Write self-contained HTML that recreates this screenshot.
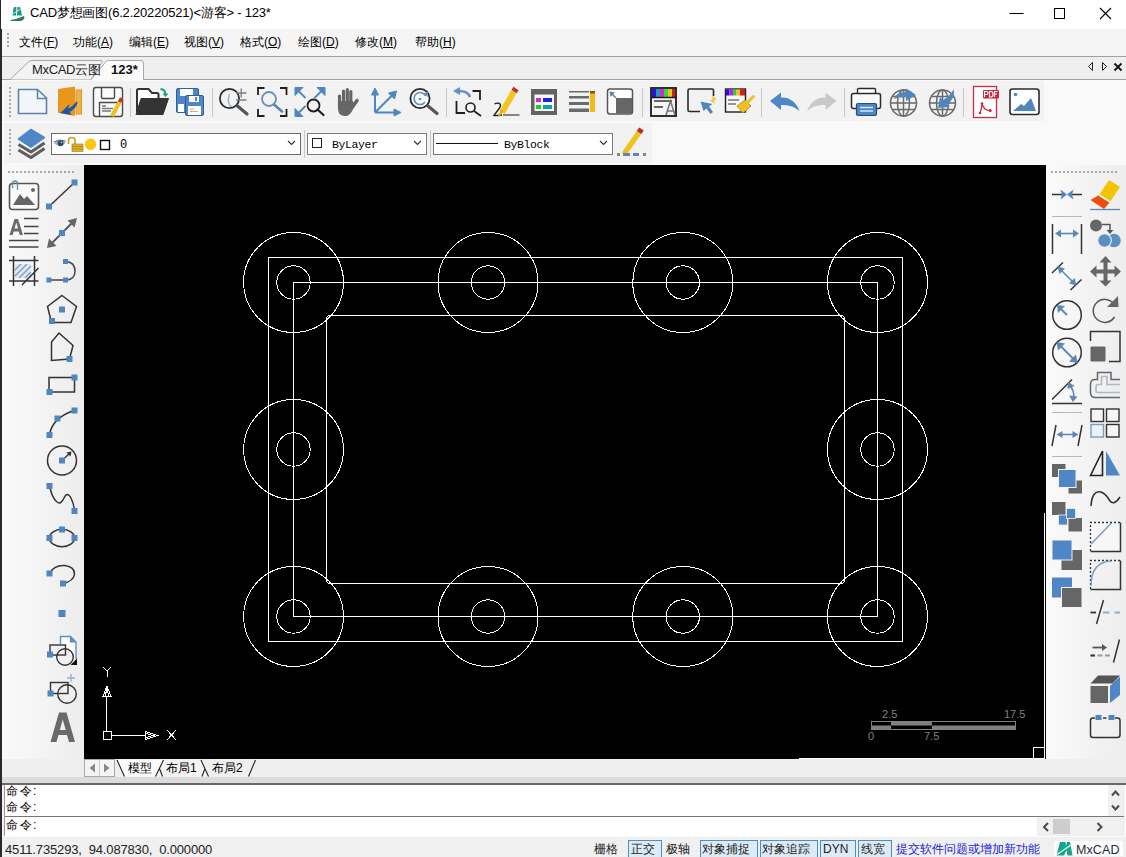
<!DOCTYPE html>
<html><head><meta charset="utf-8">
<style>
*{box-sizing:border-box}
html,body{margin:0;padding:0}
body{width:1126px;height:857px;position:relative;overflow:hidden;background:#f0f0f0;font-family:"Liberation Sans",sans-serif;color:#000}
.a{position:absolute}
.t{position:absolute;white-space:nowrap;line-height:1}
svg{position:absolute;overflow:visible}
</style></head><body>
<!-- window left border -->
<div class="a" style="left:0;top:0;width:2px;height:857px;background:#2a2a2a"></div>
<!-- title bar -->
<div class="a" style="left:1px;top:0;width:1125px;height:29px;background:#fff"></div>
<!-- menu bar -->
<div class="a" style="left:2px;top:29px;width:1124px;height:27px;background:#f5f5f5"></div>
<div class="a" style="left:2px;top:56px;width:1124px;height:1px;background:#a0a0a0"></div>
<!-- doc tabs row -->
<div class="a" style="left:2px;top:57px;width:1124px;height:22px;background:#efefef"></div>
<div class="a" style="left:2px;top:79px;width:1124px;height:1px;background:#a0a0a0"></div>
<!-- toolbar area -->
<div class="a" style="left:2px;top:80px;width:1124px;height:85px;background:#f9f9f9"></div>
<div class="a" style="left:4px;top:81px;width:1040px;height:40px;background:#f2f2f2"></div>
<div class="a" style="left:4px;top:123px;width:648px;height:40px;background:#f2f2f2"></div>
<!-- main area -->
<div class="a" style="left:2px;top:165px;width:82px;height:594px;background:linear-gradient(90deg,#fafafa,#ededed)"></div>
<div class="a" style="left:1046px;top:165px;width:80px;height:594px;background:linear-gradient(90deg,#fafafa,#ededed)"></div>
<div class="a" style="left:1121px;top:165px;width:5px;height:612px;background:#eeeeee"></div>
<!-- canvas -->
<div class="a" style="left:84px;top:165px;width:962px;height:594px;background:#000"></div>
<!-- drawing -->
<svg class="a" style="left:0;top:0" width="1126" height="857" viewBox="0 0 1126 857"><g fill="none" stroke="#fff" stroke-width="1" shape-rendering="crispEdges"><circle cx="293.5" cy="282.5" r="50"/><circle cx="293.5" cy="282.5" r="16.7"/><circle cx="488" cy="282.5" r="50"/><circle cx="488" cy="282.5" r="16.7"/><circle cx="682.8" cy="282.5" r="50"/><circle cx="682.8" cy="282.5" r="16.7"/><circle cx="877.5" cy="282.5" r="50"/><circle cx="877.5" cy="282.5" r="16.7"/><circle cx="293.5" cy="616.5" r="50"/><circle cx="293.5" cy="616.5" r="16.7"/><circle cx="488" cy="616.5" r="50"/><circle cx="488" cy="616.5" r="16.7"/><circle cx="682.8" cy="616.5" r="50"/><circle cx="682.8" cy="616.5" r="16.7"/><circle cx="877.5" cy="616.5" r="50"/><circle cx="877.5" cy="616.5" r="16.7"/><circle cx="293.5" cy="449.5" r="50"/><circle cx="293.5" cy="449.5" r="16.7"/><circle cx="877.5" cy="449.5" r="50"/><circle cx="877.5" cy="449.5" r="16.7"/><rect x="268.5" y="257.5" width="634" height="384"/><rect x="293.5" y="282.5" width="584" height="334"/><path d="M328.5,315.5H842.5L844.5,317.5V581.5L842.5,583.5H328.5L326.5,581.5V317.5Z"/></g></svg>
<svg class="a" style="left:0;top:0" width="1126" height="857" viewBox="0 0 1126 857">
<g fill="none" stroke="#fff" stroke-width="1" shape-rendering="crispEdges">
<rect x="103.5" y="731.5" width="8" height="8"/>
<path d="M106.5,731V697M103,696.5H111L107,686ZM105,696L107,689L109,696M111.5,735.5H145.5M145.5,731.5V739.5L157.5,735.5ZM146,733.5L153,735.5L146,737.5"/>
<path d="M103,667L107,671L111,667M107,671V677"/>
<path d="M167,730L176,740M176,730L167,740"/>
<path d="M1044.5,513V758.5H799"/>
<rect x="1033.5" y="747.5" width="11" height="11"/>
</g>
<g>
<rect x="871" y="721" width="145" height="9" fill="#808080"/>
<rect x="872" y="722" width="19" height="3.5" fill="#000"/>
<rect x="932" y="722" width="83" height="3.5" fill="#000"/>
<rect x="891" y="725.5" width="41" height="3.5" fill="#000"/>
</g>
<g fill="#808080" font-family="Liberation Sans" font-size="11">
<text x="882" y="718">2.5</text><text x="1004" y="718">17.5</text>
<text x="868" y="740">0</text><text x="924" y="740">7.5</text>
</g>
</svg>

<!-- bottom tab bar -->
<div class="a" style="left:2px;top:759px;width:1124px;height:24px;background:#efefef"></div>
<div class="a" style="left:2px;top:777px;width:1124px;height:6px;background:#dcdcdc"></div>
<div class="a" style="left:2px;top:783px;width:1124px;height:2px;background:#696969"></div>
<!-- command area -->
<div class="a" style="left:4px;top:785px;width:1122px;height:52px;background:#fff"></div>
<!-- status bar -->
<div class="a" style="left:2px;top:837px;width:1124px;height:20px;background:#f0f0f0"></div>

<!-- ================= TEXT ================= -->
<div class="t" style="left:30px;top:6px;font-size:13px;letter-spacing:-0.2px">CAD梦想画图(6.2.20220521)&lt;游客&gt; - 123*</div>
<!-- app icon -->
<svg style="left:9px;top:6px" width="17" height="16" viewBox="9 6 17 16">
<path d="M12.5,15.5L13.5,8Q14,7 15,7H16.5L16,15.5ZM17,15.5L17.5,7H19Q20,7 20.5,8L22,15.5Z" fill="#1a9a86"/>
<path d="M12.5,14L21,9" stroke="#aef5e8" stroke-width="1"/>
<path d="M10.5,20Q17,19 24,16L24.5,18Q23,21 20,21H12Q10.5,21 10.5,20Z" fill="#2a7a6a"/>
</svg>
<!-- window buttons -->
<svg style="left:1010px;top:8px" width="110" height="12" viewBox="0 0 110 12">
<path d="M-0.5,5.5H13.5" stroke="#000" stroke-width="1"/>
<rect x="44.5" y="0.5" width="10" height="10" fill="none" stroke="#000"/>
<path d="M90,0L101,11M101,0L90,11" stroke="#000" stroke-width="1.1"/>
</svg>
<!-- menu -->
<svg style="left:7px;top:33px" width="3" height="15"><g fill="#a0a0a0"><rect x="0" y="0" width="2" height="2"/><rect x="0" y="4" width="2" height="2"/><rect x="0" y="8" width="2" height="2"/><rect x="0" y="12" width="2" height="2"/></g></svg>
<div class="t" style="left:19px;top:36px;font-size:12px">文件(<u>F</u>)</div>
<div class="t" style="left:73px;top:36px;font-size:12px">功能(<u>A</u>)</div>
<div class="t" style="left:129px;top:36px;font-size:12px">编辑(<u>E</u>)</div>
<div class="t" style="left:184px;top:36px;font-size:12px">视图(<u>V</u>)</div>
<div class="t" style="left:240px;top:36px;font-size:12px">格式(<u>O</u>)</div>
<div class="t" style="left:298px;top:36px;font-size:12px">绘图(<u>D</u>)</div>
<div class="t" style="left:355px;top:36px;font-size:12px">修改(<u>M</u>)</div>
<div class="t" style="left:415px;top:36px;font-size:12px">帮助(<u>H</u>)</div>

<!-- ROW1 -->
<svg class="a" style="left:0;top:0" width="1126" height="857" viewBox="0 0 1126 857">
<!-- grips -->
<g fill="#a8a8a8">
<rect x="9" y="87" width="2" height="2"/><rect x="9" y="91" width="2" height="2"/><rect x="9" y="95" width="2" height="2"/><rect x="9" y="99" width="2" height="2"/><rect x="9" y="103" width="2" height="2"/><rect x="9" y="107" width="2" height="2"/><rect x="9" y="111" width="2" height="2"/><rect x="9" y="115" width="2" height="2"/>
<rect x="9" y="129" width="2" height="2"/><rect x="9" y="133" width="2" height="2"/><rect x="9" y="137" width="2" height="2"/><rect x="9" y="141" width="2" height="2"/><rect x="9" y="145" width="2" height="2"/><rect x="9" y="149" width="2" height="2"/><rect x="9" y="153" width="2" height="2"/>
</g>
<!-- separators -->
<g fill="#c8c8c8">
<rect x="130" y="88" width="1" height="29"/><rect x="212" y="88" width="1" height="29"/><rect x="446" y="88" width="1" height="29"/>
<rect x="642" y="88" width="1" height="29"/><rect x="761" y="88" width="1" height="29"/><rect x="844" y="88" width="1" height="29"/><rect x="963" y="88" width="1" height="29"/>
<rect x="304" y="130" width="1" height="28"/><rect x="430" y="130" width="1" height="28"/>
</g>
<!-- 1 new -->
<path d="M18.5,89.5H37.5L46.5,98V113.5H18.5Z" fill="#f2f6fb" stroke="#5f82aa" stroke-width="1.6"/>
<path d="M37.5,89.5V98.5H46.5" fill="none" stroke="#5f82aa" stroke-width="1.6"/>
<!-- 2 orange book -->
<path d="M58,89L75,86.5V116L58,113Z" fill="#e9961c"/>
<rect x="76" y="90" width="5.5" height="24" fill="#f0b04a" stroke="#e39324" stroke-width="1"/>
<path d="M77,102Q73,108 67,110L68,106.5L62,112.5L70,114L68.5,111.5Q75,109 77,102Z" fill="#1b56a8" stroke="#1b56a8" stroke-width="1.5"/>
<!-- 3 save pencil -->
<rect x="93.5" y="87.5" width="29" height="29" rx="2.5" fill="#fafafa" stroke="#4a4a4a" stroke-width="1.4"/>
<path d="M101.5,87.5V97Q101.5,98.5 103,98.5H113Q114.5,98.5 114.5,97V87.5" fill="none" stroke="#4a4a4a" stroke-width="1.4"/>
<path d="M99.5,116.5V102.5H121" fill="none" stroke="#4a4a4a" stroke-width="1.4"/>
<path d="M102,106H106M102,108.5H113M102,111H111" stroke="#7a7a7a" stroke-width="1.3"/>
<path d="M112,116L120,101.5" stroke="#f1c21b" stroke-width="4"/>
<path d="M119.5,102L121.5,98" stroke="#c83232" stroke-width="3.5"/>
<!-- 4 open folder -->
<path d="M137,112V90.5Q137,89 138.5,89H148.5L152,93H157Q158.5,93 158.5,94.5V99" fill="#fff" stroke="#333" stroke-width="2"/>
<path d="M136,114.5L141,98.5H168.5L163,114.5Z" fill="#333" stroke="#333" stroke-width="1" stroke-linejoin="round"/>
<path d="M160.5,89Q165,89.5 165.5,94" fill="none" stroke="#17a085" stroke-width="2"/><path d="M162.5,93.5H168.5L165.5,97Z" fill="#17a085"/>
<!-- 5 floppies -->
<rect x="176.5" y="88.5" width="22" height="24" rx="1.5" fill="#4f86c6" stroke="#2f5f9a" stroke-width="1"/>
<rect x="180" y="89" width="13" height="7" fill="#fff"/>
<rect x="185.5" y="95.5" width="18" height="20" rx="1.5" fill="#4f86c6" stroke="#2f5f9a" stroke-width="1"/>
<rect x="189" y="96" width="10" height="6" fill="#fff"/><rect x="195" y="97" width="2" height="4" fill="#4f86c6"/>
<rect x="188" y="106" width="13" height="9" fill="#fff"/><path d="M190,109H194M190,111.5H198" stroke="#d88a50" stroke-width="0.8"/>
<rect x="178" y="104" width="6" height="8" fill="#fff"/>
<!-- 6 zoom +- -->
<path d="M233,108.5Q226,104 229.5,94" fill="none" stroke="#9db0c6" stroke-width="1.4"/>
<circle cx="229.5" cy="98.5" r="9.6" fill="none" stroke="#2b2b2b" stroke-width="1.8"/>
<path d="M237.5,106L247,114" stroke="#555" stroke-width="3.2" stroke-linecap="round"/>
<path d="M236,93H246.5M241.2,88.5V97.5M236,100H246.5" stroke="#6f7f90" stroke-width="1.3"/>
<!-- 7 zoom window -->
<path d="M258,95V88H264.5M280,88H286.5V95M286.5,109V116H280M264.5,116H258V109" fill="none" stroke="#1e1e1e" stroke-width="1.8"/>
<circle cx="269" cy="99" r="7" fill="none" stroke="#6d8fb3" stroke-width="1.8"/>
<path d="M274,104.5L282,111.5" stroke="#5c86b3" stroke-width="2.6" stroke-linecap="round"/>
<!-- 8 zoom extents -->
<g fill="#4f86c0" stroke="#4f86c0">
<path d="M295,87.5H303L295,95.5Z"/><path d="M325,87.5V95.5L317,87.5Z"/><path d="M295,116.5V108.5L303,116.5Z"/>
<path d="M298,90.5L305.5,98M322,90.5L314.5,98M298,113.5L305.5,106" stroke-width="1.8" fill="none"/>
</g>
<circle cx="313.5" cy="105.5" r="6" fill="none" stroke="#1f1f1f" stroke-width="1.8"/>
<path d="M317.5,109.5L323.5,115" stroke="#1f1f1f" stroke-width="2.2" stroke-linecap="round"/>
<!-- 9 hand -->
<g stroke="#666" stroke-linecap="round" fill="none">
<path d="M339.5,96V105M343.5,91V103M347.3,89.5V103M350.8,91.5V104" stroke-width="3.2"/>
<path d="M352.5,107L357,100.5" stroke-width="3.4"/>
</g>
<path d="M338,101H353L354.5,105.5Q352,113 348,115.5Q343,117 339.5,114Q337.5,111 338,104Z" fill="#666"/>
<!-- 10 axes -->
<g stroke="#4f86c0" stroke-width="2" fill="#4f86c0">
<path d="M375,112.5V92M375,112.5H396M375,112.5L392,95.5" fill="none"/>
<path d="M375,88L371.5,95H378.5Z" stroke-width="1"/><path d="M401,112.5L394,109V116Z" stroke-width="1"/><path d="M396.5,91L388.5,93L394.5,99Z" stroke-width="1"/>
</g>
<!-- 11 zoom realtime -->
<circle cx="420" cy="98.5" r="9.6" fill="#f5f8fc" stroke="#2b2b2b" stroke-width="1.8"/>
<path d="M425.5,96A6,6 0 1 0 425,102" fill="none" stroke="#6f8fb0" stroke-width="1.6"/>
<path d="M423,93.5L427.5,97L428,92Z" fill="#6f8fb0"/>
<circle cx="420" cy="99" r="1.3" fill="#6f8fb0"/>
<path d="M428,106L437,113.5" stroke="#555" stroke-width="3.2" stroke-linecap="round"/>
<!-- 12 zoom previous -->
<path d="M470,97Q468,91 459,91" fill="none" stroke="#5f92c8" stroke-width="2.6"/><path d="M453,91L460,87V95Z" fill="#5f92c8"/>
<path d="M472.5,91H480V100M456.5,101V113H465" fill="none" stroke="#1e1e1e" stroke-width="1.8"/>
<circle cx="470.5" cy="107.5" r="4.5" fill="none" stroke="#1e1e1e" stroke-width="1.6"/>
<path d="M474,111L481,116" stroke="#1e1e1e" stroke-width="1.8"/>
<!-- 13 pencil -->
<path d="M494.5,104Q497,102.5 499.5,103.5Q501.5,105 499.5,108Q496.5,112 494,115.5Q495,116 502,115" fill="none" stroke="#222" stroke-width="1.4"/>
<path d="M503,115H519.5" stroke="#555" stroke-width="1.4"/>
<path d="M502,112.5L514,91.5" stroke="#f3c51f" stroke-width="6"/>
<path d="M514,91.5L516,88.5" stroke="#c23030" stroke-width="6"/>
<path d="M499,116L502.5,110" stroke="#e0a800" stroke-width="2"/>
<!-- 14 layer table -->
<rect x="531" y="89" width="26" height="26" fill="#636363"/>
<rect x="534.5" y="94.5" width="19.5" height="16.5" fill="#f7f7f7"/>
<rect x="536" y="98" width="5" height="4" fill="#e020e0"/><rect x="543" y="98" width="9" height="4" fill="#2020e0"/>
<rect x="536" y="105" width="5" height="4" fill="#20d020"/><rect x="543" y="105" width="9" height="4" fill="#10a0a0"/>
<!-- 15 lines pencil -->
<g fill="#6a6a6a"><rect x="569" y="91" width="20" height="1.5"/><rect x="569" y="96" width="20" height="2.5"/><rect x="569" y="102" width="20" height="3"/><rect x="569" y="108.5" width="20" height="3.5"/></g>
<rect x="590" y="91" width="5" height="21" fill="#f0bb1a"/><rect x="590" y="91" width="5" height="2.5" fill="#a04a10"/>
<!-- 16 box arrow -->
<rect x="607.5" y="89" width="25" height="25" rx="2.5" fill="#fff" stroke="#555" stroke-width="1.5"/>
<path d="M616,98H632V112Q632,113.5 630.5,113.5H616Z" fill="#666"/>
<path d="M616,98L610,92" stroke="#5b87b5" stroke-width="1.6"/><path d="M609.5,91.5L615,92.5L610.5,97Z" fill="#5b87b5"/>
<!-- 17 text style -->
<rect x="651" y="88" width="25" height="28" fill="#f4f4f4" stroke="#1a1a1a" stroke-width="1.8"/>
<rect x="652" y="89" width="4" height="8" fill="#2a10e0"/><rect x="656" y="89" width="4" height="8" fill="#1aa0a8"/><rect x="660" y="89" width="4" height="8" fill="#e020e0"/><rect x="664" y="89" width="4" height="8" fill="#30e030"/><rect x="668" y="89" width="4" height="8" fill="#f0c020"/><rect x="672" y="89" width="3" height="8" fill="#d02020"/>
<path d="M651,97.5H676" stroke="#1a1a1a" stroke-width="1.5"/>
<path d="M654,101H672M654,107H663" stroke="#666" stroke-width="2"/>
<path d="M666,115L670.5,101L675,115M667.5,111H673.5" fill="none" stroke="#777" stroke-width="1.6"/>
<!-- 18 select -->
<path d="M700,111.5H689.5Q688,111.5 688,110V90.5Q688,89 689.5,89H712Q713.5,89 713.5,90.5V96" fill="none" stroke="#2a2a2a" stroke-width="1.6"/>
<path d="M700.5,101.5L712.5,104L709,106.5L713,112L710.5,114L706.5,108.5L703.5,111Z" fill="#4f86c0"/>
<path d="M712,95.5L716.5,99L713.5,100.5L715.5,104L710,100.5L713,99Z" fill="#f0c21b"/>
<!-- 19 brush -->
<rect x="725.5" y="89" width="20" height="23" fill="#f6f6f6" stroke="#222" stroke-width="1.4"/>
<rect x="726" y="89.5" width="3.5" height="6" fill="#2a10e0"/><rect x="729.5" y="89.5" width="3.5" height="6" fill="#c020e0"/><rect x="733" y="89.5" width="3.5" height="6" fill="#30d030"/><rect x="736.5" y="89.5" width="3.5" height="6" fill="#f0c020"/><rect x="740" y="89.5" width="5" height="6" fill="#d02020"/>
<path d="M728,100H739M728,104H736" stroke="#777" stroke-width="1.5"/>
<path d="M737,106L745,100L751,106L743,113Z" fill="#f0c020" stroke="#b08a10" stroke-width="0.8"/>
<path d="M747,103L753.5,96.5" stroke="#f0c020" stroke-width="3" stroke-linecap="round"/>
<!-- 20 undo -->
<path d="M770,101L781,92.5V97.5Q794,97 799.5,111Q792,104 781,105V110Z" fill="#4f86c6"/>
<!-- 21 redo -->
<path d="M836.5,101L825.5,92.5V97.5Q812.5,97 807,111Q814.5,104 825.5,105V110Z" fill="#c9c9c9"/>
<!-- 22 printer -->
<rect x="857.5" y="88.5" width="18" height="5.5" rx="1" fill="#fff" stroke="#2a2a2a" stroke-width="1.4"/>
<rect x="851.5" y="93.5" width="29" height="15" rx="2" fill="#fafafa" stroke="#2a2a2a" stroke-width="1.5"/>
<rect x="856.5" y="103.5" width="20" height="12" rx="1.5" fill="#4f86c0" stroke="#234e7a" stroke-width="1.2"/>
<path d="M860,107.5H873M860,111H873" stroke="#cfe6ff" stroke-width="1.5"/>
<!-- 23 globe up -->
<g fill="none" stroke="#6a6a6a" stroke-width="1.5">
<circle cx="903.5" cy="103" r="13"/><ellipse cx="903.5" cy="103" rx="6" ry="13"/><path d="M903.5,90V116M890.5,103H916.5M892,96.5H915M892,109.5H915"/>
</g>
<path d="M894,99Q896,92 906,92V88.5L916,95L906,101V97Q898,97 894,99Z" fill="#4f86c0"/>
<!-- 24 globe down -->
<g fill="none" stroke="#6a6a6a" stroke-width="1.5">
<circle cx="942.5" cy="103" r="13"/><ellipse cx="942.5" cy="103" rx="6" ry="13"/><path d="M942.5,90V116M929.5,103H955.5M931,96.5H954M931,109.5H954"/>
</g>
<path d="M954,89Q955,100 947,104L950,107L938,108L940,97L943,100Q950,96 954,89Z" fill="#4f86c0"/>
<!-- 25 pdf -->
<rect x="973.5" y="86.5" width="23" height="31" fill="#fff" stroke="#c0304a" stroke-width="1.3"/>
<rect x="983" y="90" width="16" height="8.5" rx="1" fill="#c8283c"/>
<path d="M984.5,97V91.5H986.5Q988,91.5 988,93Q988,94.5 986.5,94.5H984.5M989.5,97V91.5H991Q993,91.5 993,94.25Q993,97 991,97ZM994.5,97V91.5H997.5M994.5,94H997" fill="none" stroke="#fff" stroke-width="1.1"/>
<path d="M982,104Q983,107 985,109Q988,111 990,110.5M982,104Q981.5,109 980,113" fill="none" stroke="#c8283c" stroke-width="1.3"/>
<circle cx="982" cy="103.5" r="1.3" fill="#c8283c"/><circle cx="990.2" cy="110.5" r="1.5" fill="#c8283c"/><circle cx="980" cy="113" r="1.3" fill="#c8283c"/>
<!-- 26 image -->
<rect x="1010" y="89" width="29" height="25.5" rx="2.5" fill="#fff" stroke="#2a2a2a" stroke-width="1.6"/>
<circle cx="1015.5" cy="94.5" r="1.8" fill="#4f86c0"/>
<path d="M1013,111L1021,104L1024,106L1031,98L1036,111Z" fill="#4f86c0"/>
</svg>

<!-- ROW2 -->
<!-- doc tabs -->
<svg class="a" style="left:0;top:0" width="1126" height="857" viewBox="0 0 1126 857">
<path d="M10,79.5L29,61.5Q30.5,60.5 32,60.5H101Q103,60.5 102,62L91,79.5" fill="#f3f3f3" stroke="#a6a6a6" stroke-width="1"/>
<path d="M91,79.5L106,61.5Q107,60.5 108.5,60.5H141Q143.5,60.5 143.5,63V79.5" fill="#fafafa" stroke="#a6a6a6" stroke-width="1"/>
<path d="M92,79.5H143" stroke="#fafafa" stroke-width="1.2"/>
<!-- tab scroll arrows -->
<path d="M1092.5,62.5V70.5L1088.5,66.5Z" fill="none" stroke="#222" stroke-width="1"/>
<path d="M1102.5,62.5V70.5L1106.5,66.5Z" fill="none" stroke="#222" stroke-width="1"/>
<path d="M1114.5,63.5L1121.5,70.5M1121.5,63.5L1114.5,70.5" stroke="#111" stroke-width="1.8"/>
<!-- layers icon -->
<path d="M18.5,150L31,157.5L44.5,148.5" fill="none" stroke="#5e5e5e" stroke-width="3.2" stroke-linejoin="round"/>
<path d="M18.5,144.5L31,152L44.5,143" fill="none" stroke="#5e5e5e" stroke-width="3.2" stroke-linejoin="round"/>
<path d="M31,127.8L46,137.5L31,148.8L16.8,139Z" fill="#f4f8fc"/><path d="M31,129.5L44.3,137.5L31,147L18.5,139Z" fill="#4f86c6" stroke="#4f86c6" stroke-width="1.6" stroke-linejoin="round"/>
<!-- combo 1 -->
<rect x="51.5" y="133.5" width="249" height="21" fill="#fff" stroke="#6e6e6e" stroke-width="1"/>
<path d="M53.8,143.5Q59,137.5 66,142Q62,149 53.8,143.5Z" fill="#a9b6c4"/><path d="M54,142Q59,138.5 65.5,141" fill="none" stroke="#5a6a7a" stroke-width="1"/><circle cx="60.5" cy="143.3" r="2.9" fill="#2a4868"/><circle cx="61.3" cy="142.5" r="0.8" fill="#dde"/>
<path d="M68.5,144V140Q68.5,137.5 71.5,137.5Q75,137.5 75,140V145" fill="none" stroke="#c8a020" stroke-width="1.6"/>
<rect x="72" y="144" width="11" height="7.5" fill="#e0b030" stroke="#a07810" stroke-width="0.6"/>
<path d="M72,146.5H83M72,149H83" stroke="#a07810" stroke-width="0.7"/>
<circle cx="90.6" cy="144.2" r="5.3" fill="#ffc800" stroke="#f0a800" stroke-width="1" stroke-dasharray="1.5,1"/>
<rect x="100.5" y="140.5" width="9" height="9" fill="#fff" stroke="#111" stroke-width="1.4"/>
<path d="M288,141L291.5,144.5L295,141" fill="none" stroke="#333" stroke-width="1.1"/>
<!-- combo 2 -->
<rect x="307.5" y="133.5" width="119" height="21" fill="#fff" stroke="#7a7a7a" stroke-width="1"/>
<rect x="312.5" y="138.5" width="9" height="9" fill="#fff" stroke="#222" stroke-width="1"/>
<path d="M414,141L417.5,144.5L421,141" fill="none" stroke="#333" stroke-width="1.1"/>
<!-- combo 3 -->
<rect x="433.5" y="133.5" width="179" height="21" fill="#fff" stroke="#7a7a7a" stroke-width="1"/>
<path d="M436,143.5H498" stroke="#111" stroke-width="1"/>
<path d="M600,141L603.5,144.5L607,141" fill="none" stroke="#333" stroke-width="1.1"/>
<!-- lineweight pencil -->
<path d="M624,154L640,131" stroke="#f0c21b" stroke-width="5.5"/>
<path d="M639,132.5L641.5,129" stroke="#c02a2a" stroke-width="5.5"/>
<g fill="#5b87b5"><rect x="617" y="153" width="3" height="3" fill="#7a8a9a"/><rect x="623" y="153" width="7" height="3"/><rect x="633" y="153" width="6" height="3"/><rect x="643" y="153" width="3" height="3" fill="#7a8a9a"/></g>
</svg>
<div class="t" style="left:32px;top:63px;font-size:13px;color:#222;letter-spacing:-0.35px">MxCAD云图</div>
<div class="t" style="left:111px;top:63px;font-size:13px;font-weight:bold;color:#111">123*</div>
<div class="t" style="left:120px;top:139px;font-size:12px;font-family:'Liberation Mono',monospace">0</div>
<div class="t" style="left:332px;top:139px;font-size:11.5px;font-family:'Liberation Mono',monospace;letter-spacing:-0.4px">ByLayer</div>
<div class="t" style="left:504px;top:139px;font-size:11.5px;font-family:'Liberation Mono',monospace;letter-spacing:-0.4px">ByBlock</div>

<!-- LEFT -->
<svg class="a" style="left:0;top:0" width="1126" height="857" viewBox="0 0 1126 857">
<g fill="#a8a8a8">
<rect x="8" y="171" width="2" height="2"/><rect x="12" y="171" width="2" height="2"/><rect x="16" y="171" width="2" height="2"/><rect x="20" y="171" width="2" height="2"/><rect x="24" y="171" width="2" height="2"/><rect x="28" y="171" width="2" height="2"/><rect x="32" y="171" width="2" height="2"/><rect x="36" y="171" width="2" height="2"/><rect x="40" y="171" width="2" height="2"/><rect x="44" y="171" width="2" height="2"/><rect x="48" y="171" width="2" height="2"/><rect x="52" y="171" width="2" height="2"/><rect x="56" y="171" width="2" height="2"/><rect x="60" y="171" width="2" height="2"/><rect x="64" y="171" width="2" height="2"/><rect x="68" y="171" width="2" height="2"/><rect x="72" y="171" width="2" height="2"/>
<rect x="1051" y="171" width="2" height="2"/><rect x="1055" y="171" width="2" height="2"/><rect x="1059" y="171" width="2" height="2"/><rect x="1063" y="171" width="2" height="2"/><rect x="1067" y="171" width="2" height="2"/><rect x="1071" y="171" width="2" height="2"/><rect x="1075" y="171" width="2" height="2"/><rect x="1079" y="171" width="2" height="2"/><rect x="1083" y="171" width="2" height="2"/><rect x="1087" y="171" width="2" height="2"/><rect x="1091" y="171" width="2" height="2"/><rect x="1095" y="171" width="2" height="2"/><rect x="1099" y="171" width="2" height="2"/><rect x="1103" y="171" width="2" height="2"/><rect x="1107" y="171" width="2" height="2"/><rect x="1111" y="171" width="2" height="2"/><rect x="1115" y="171" width="2" height="2"/>
</g>
<!-- L col1: image -->
<rect x="9.5" y="183.5" width="29" height="26" rx="3" fill="#fafafa" stroke="#555" stroke-width="1.6"/>
<path d="M13,205L20,194L24,199L27,196L35,205Z" fill="#666"/>
<circle cx="33" cy="190" r="2" fill="#666"/>
<path d="M12.5,188V183.5Q12.5,181 15,181Q17.5,181 17.5,183.5V190" fill="none" stroke="#6f8fb0" stroke-width="1.4"/>
<!-- text A= -->
<path fill-rule="evenodd" fill="#6a6a6a" d="M9.5,235L14.5,219H18L23,235H19.8L18.8,231.5H13.7L12.7,235ZM14.5,228.5H18L16.25,222.5Z"/>
<path d="M24,218.5H38.5M24,226.5H38.5M24,233.5H38.5M9,240.5H38.5M9,247H38.5" stroke="#444" stroke-width="1.5"/>
<!-- hatch -->
<path d="M15,264L31,264L31,278L15,278Z" fill="#dfe9f4"/>
<path d="M15,270L21,264M15,276L27,264M19,278L31,266M25,278L31,272" stroke="#7a9cc2" stroke-width="1.3"/>
<path d="M9,260.5H38.5M9,281H38.5M13.5,256V286M34.5,256V286M22,285L38.5,268" stroke="#333" stroke-width="1.5" fill="none"/>
<!-- col2 line -->
<path d="M49,206.5L74.5,182.5" stroke="#333" stroke-width="1.5"/>
<rect x="46" y="203.5" width="6" height="6" fill="#4f86c0"/><rect x="71.5" y="179.5" width="6" height="6" fill="#4f86c0"/>
<!-- dim -->
<path d="M52,243L72,223" stroke="#555" stroke-width="1.8"/>
<path d="M47,248L49,238.5L56.5,246Z" fill="#666"/><path d="M77,218L74.5,227.5L67.5,220.5Z" fill="#666"/>
<rect x="59" y="230" width="6" height="6" fill="#4f86c0"/>
<!-- arc -->
<path d="M49,280H65.5M65.5,261.5Q75,262 75,271Q75,280 65.5,280" fill="none" stroke="#444" stroke-width="1.5"/>
<rect x="46.5" y="277.5" width="5" height="5" fill="#4f86c0"/><rect x="63" y="277.5" width="5" height="5" fill="#4f86c0"/><rect x="63" y="259" width="5" height="5" fill="#4f86c0"/>
<!-- pentagon -->
<path d="M62,295.5L76.5,306.5L71,322.5H51.5L47.5,306.5Z" fill="none" stroke="#333" stroke-width="1.5"/>
<rect x="59" y="306.5" width="6" height="6" fill="#4f86c0"/><rect x="49" y="318" width="6" height="6" fill="#4f86c0"/>
<!-- polygon -->
<path d="M59,333L73,345.5L69.5,359L51.5,360.5V342Z" fill="none" stroke="#333" stroke-width="1.5"/>
<rect x="66.5" y="356" width="6" height="6" fill="#4f86c0"/>
<!-- rect -->
<rect x="49" y="377.5" width="25.5" height="14.5" fill="none" stroke="#333" stroke-width="1.5"/>
<rect x="71.5" y="374.5" width="6" height="6" fill="#4f86c0"/><rect x="46.5" y="389" width="6" height="6" fill="#4f86c0"/>
<!-- 3p arc -->
<path d="M49.5,435Q52,418 74,410.5" fill="none" stroke="#333" stroke-width="1.5"/>
<rect x="46.5" y="432" width="6" height="6" fill="#4f86c0"/><rect x="54.5" y="415.5" width="6" height="6" fill="#4f86c0"/><rect x="71.5" y="407.5" width="6" height="6" fill="#4f86c0"/>
<!-- circle -->
<circle cx="62" cy="460.5" r="14.5" fill="none" stroke="#333" stroke-width="1.5"/>
<path d="M62,460.5L70,453" stroke="#333" stroke-width="1.4"/><path d="M71.5,451.5L66.5,452.5L70.5,456.5Z" fill="#333"/>
<rect x="59" y="457.5" width="6" height="6" fill="#4f86c0"/>
<!-- spline -->
<path d="M49.5,486Q52,498 57,502Q61,505 64,498Q67,491 71,498Q73.5,503 74.5,510" fill="none" stroke="#333" stroke-width="1.5"/>
<rect x="46.5" y="483" width="6" height="6" fill="#4f86c0"/><rect x="71.5" y="508" width="6" height="6" fill="#4f86c0"/>
<!-- ellipse -->
<ellipse cx="62" cy="538" rx="12.5" ry="8.8" fill="none" stroke="#333" stroke-width="1.5"/>
<rect x="59" y="526.5" width="6" height="6" fill="#4f86c0"/><rect x="46.5" y="535" width="6" height="6" fill="#4f86c0"/><rect x="71.5" y="535" width="6" height="6" fill="#4f86c0"/>
<!-- ellipse arc -->
<path d="M49.5,573Q55,564.5 65,565.5Q75,567 74.5,574.5Q73.5,581 63,583.5" fill="none" stroke="#333" stroke-width="1.5"/>
<rect x="46.5" y="570.5" width="6" height="6" fill="#4f86c0"/><rect x="60" y="580.5" width="6" height="6" fill="#4f86c0"/>
<!-- point -->
<rect x="58.5" y="610" width="7" height="7" fill="#4f86c0"/>
<!-- block insert -->
<path d="M60.5,644V636.5H70.5L76,642V659" fill="#fff" stroke="#5b8ec4" stroke-width="1.4"/>
<path d="M70.5,636.5V642H76" fill="#5b8ec4" stroke="#5b8ec4" stroke-width="1.2"/>
<rect x="50" y="645" width="15.5" height="10" fill="none" stroke="#333" stroke-width="1.4"/>
<circle cx="65" cy="657" r="8.3" fill="none" stroke="#333" stroke-width="1.4"/>
<rect x="47" y="651.5" width="6" height="6" fill="#4f86c0"/>
<path d="M70.5,665H77V658.5Z" fill="#111"/>
<!-- block new -->
<rect x="50.5" y="682.5" width="17.5" height="11" fill="none" stroke="#333" stroke-width="1.4"/>
<circle cx="67" cy="694" r="9.3" fill="none" stroke="#333" stroke-width="1.4"/>
<rect x="47.5" y="690.5" width="6" height="6" fill="#4f86c0"/>
<path d="M71,674V682M67,678H75" stroke="#8fb0d8" stroke-width="1.3"/>
<!-- big A -->
<path fill-rule="evenodd" fill="#6a6a6a" d="M50.5,742L59,712.5H66.5L75,742H69L67,735H58.5L56.5,742ZM59.8,730H65.7L62.75,719.5Z"/>
</svg>

<!-- RIGHT -->
<svg class="a" style="left:0;top:0" width="1126" height="857" viewBox="0 0 1126 857">
<!-- separators col1 -->
<g fill="#b8b8b8"><rect x="1052" y="216" width="30" height="1"/><rect x="1052" y="412" width="30" height="1"/><rect x="1052" y="456" width="30" height="1"/></g>
<!-- break at point -->
<path d="M1052,194.5H1063M1071,194.5H1082" stroke="#333" stroke-width="1.6"/>
<path d="M1067,194.5L1060.5,189.5L1062,194.5L1060.5,199.5Z" fill="#4f86c0"/><path d="M1067,194.5L1073.5,189.5L1072,194.5L1073.5,199.5Z" fill="#4f86c0"/>
<!-- eraser -->
<path d="M1099,195L1109,180L1120,187L1110,202Z" fill="#f5c400"/>
<path d="M1090.5,200L1099,195L1110,202L1104,209Z" fill="#f04a10"/>
<path d="M1099,195L1110,202" stroke="#fff" stroke-width="1.5"/>
<path d="M1090,209.5H1120" stroke="#5b87b5" stroke-width="1.3"/>
<!-- dim linear -->
<path d="M1052.5,224V254M1081.5,224V254" stroke="#333" stroke-width="1.5"/>
<path d="M1057,233.5H1077" stroke="#5b87b5" stroke-width="1.6"/>
<path d="M1055,233.5L1061,229.5V237.5Z" fill="#5b87b5"/><path d="M1079,233.5L1073,229.5V237.5Z" fill="#5b87b5"/>
<!-- copy -->
<circle cx="1096" cy="225.5" r="6" fill="#666"/>
<path d="M1102,224.5H1110V231" fill="none" stroke="#555" stroke-width="1.5"/><path d="M1106.5,230H1113.5L1110,234Z" fill="#555"/>
<circle cx="1114" cy="240.5" r="6.8" fill="#5b8ec4"/>
<circle cx="1104.5" cy="240.5" r="6.8" fill="#5b8ec4" stroke="#f2f2f2" stroke-width="1.2"/>
<!-- dim aligned -->
<path d="M1052,273L1063,262.5M1070.5,290L1081.5,279.5" stroke="#333" stroke-width="1.5"/>
<path d="M1061,270L1073,282" stroke="#5b87b5" stroke-width="1.5"/>
<path d="M1057.5,266.5L1065,268.5L1059.5,274Z" fill="#5b87b5"/><path d="M1076.5,285.5L1069,283.5L1074.5,278Z" fill="#5b87b5"/>
<!-- move -->
<path d="M1105.5,256L1111.5,262.5H1107.5V269.5H1114.5V265.5L1121,271.5L1114.5,277.5V273.5H1107.5V280.5H1111.5L1105.5,286.5L1099.5,280.5H1103.5V273.5H1096.5V277.5L1090,271.5L1096.5,265.5V269.5H1103.5V262.5H1099.5Z" fill="#666"/>
<!-- dim radius -->
<circle cx="1067" cy="315" r="14.3" fill="none" stroke="#333" stroke-width="1.5"/>
<path d="M1067,315L1059.5,307.5" stroke="#5b87b5" stroke-width="1.8"/><path d="M1057,305L1065,306L1058,313Z" fill="#5b87b5"/>
<!-- rotate -->
<path d="M1114,304A11.5,11.5 0 1 0 1114.5,317" fill="none" stroke="#555" stroke-width="1.5"/>
<path d="M1118,296L1118.5,307H1107Z" fill="#666"/>
<!-- dim diameter -->
<circle cx="1067" cy="352.5" r="14.3" fill="none" stroke="#333" stroke-width="1.5"/>
<path d="M1060,345.5L1074,359.5" stroke="#5b87b5" stroke-width="1.8"/>
<path d="M1056.5,342L1065,343.5L1058,350.5Z" fill="#5b87b5"/><path d="M1077.5,363L1069,361.5L1076,354.5Z" fill="#5b87b5"/>
<!-- scale -->
<path d="M1090.5,341V331.5H1120V361.5H1109" fill="none" stroke="#333" stroke-width="1.5"/>
<rect x="1090.5" y="346.5" width="15" height="15" rx="1" fill="#666"/>
<!-- dim angular -->
<path d="M1052,399.5L1072,379.5M1052,403.5H1082" stroke="#333" stroke-width="1.5"/>
<path d="M1069.5,385Q1075,391 1073.5,399" fill="none" stroke="#5b87b5" stroke-width="1.6"/>
<path d="M1068,381.5L1074.5,386L1067.5,389Z" fill="#5b87b5"/><path d="M1073,402L1069,395.5L1077.5,396.5Z" fill="#5b87b5"/>
<!-- offset -->
<path d="M1120,379.5H1111V372.5H1097.5V379.5H1095Q1090.5,379.5 1090.5,384.5V392.5Q1090.5,397.5 1095.5,397.5H1120" fill="none" stroke="#666" stroke-width="1.5"/>
<path d="M1120,384.5H1107V376.5H1101.5V384.5H1098Q1096,384.5 1096,386.5V390.5Q1096,392.5 1098,392.5H1120" fill="none" stroke="#a9b9c9" stroke-width="1.6"/>
<!-- array -->
<g fill="#f5f5f5" stroke="#333" stroke-width="1.4">
<rect x="1091" y="409" width="12.5" height="12.5"/><rect x="1106.5" y="409" width="12.5" height="12.5"/><rect x="1106.5" y="424.5" width="12.5" height="12.5"/>
</g>
<rect x="1091" y="424.5" width="12.5" height="12.5" fill="#eaf1f8" stroke="#7a9cc2" stroke-width="1.4"/>
<!-- dim continue -->
<path d="M1052,446L1056,425M1078,446L1082,425" stroke="#333" stroke-width="1.5"/>
<path d="M1059,434.5H1076" stroke="#5b87b5" stroke-width="1.5"/>
<path d="M1056.5,434.5L1062.5,431V438Z" fill="#5b87b5"/><path d="M1078.5,434.5L1072.5,431V438Z" fill="#5b87b5"/>
<!-- mirror -->
<path d="M1090.5,475.5L1102.5,451V475.5Z" fill="none" stroke="#222" stroke-width="1.6"/>
<path d="M1106,451V475.5H1120Z" fill="#4f86c6"/>
<!-- draw order 1-4 -->
<rect x="1052" y="464" width="13.5" height="13" fill="#666"/>
<rect x="1068.5" y="480.5" width="13.5" height="13" fill="#666"/>
<rect x="1058.5" y="469.5" width="17.5" height="18" fill="#4f86c6" stroke="#f2f2f2" stroke-width="1"/>
<rect x="1052" y="502" width="13.5" height="13" fill="#666"/>
<rect x="1068.5" y="518" width="13.5" height="13.5" fill="#666"/>
<rect x="1058.5" y="515" width="9" height="10" fill="#4f86c6" stroke="#f2f2f2" stroke-width="0.8"/>
<rect x="1066.5" y="508.5" width="9" height="10" fill="#4f86c6" stroke="#f2f2f2" stroke-width="0.8"/>
<rect x="1061.5" y="550" width="20.5" height="20" fill="#666"/>
<rect x="1052" y="540" width="20" height="20" fill="#4f86c6" stroke="#f2f2f2" stroke-width="1"/>
<rect x="1052" y="577.5" width="20" height="20" fill="#4f86c6"/>
<rect x="1061.5" y="587.5" width="20.5" height="20" fill="#666" stroke="#f2f2f2" stroke-width="1"/>
<!-- spline -->
<path d="M1091,506Q1092,490 1101,492Q1106,494 1110,501Q1114,506 1120,497" fill="none" stroke="#333" stroke-width="1.6"/>
<!-- chamfer -->
<path d="M1090.5,522.5H1120.5V551.5H1090.5Z" fill="#f7f7f7" stroke="none"/>
<path d="M1120.5,522.5V551.5H1090.5" fill="none" stroke="#333" stroke-width="1.5"/>
<path d="M1090.5,551V522.5H1120" fill="none" stroke="#333" stroke-width="1.3" stroke-dasharray="2,2"/>
<path d="M1091,544L1111.5,523" stroke="#7a9cc2" stroke-width="1.5"/>
<!-- fillet -->
<path d="M1120.5,560.5V589.5H1090.5" fill="none" stroke="#333" stroke-width="1.5"/>
<path d="M1090.5,589V560.5H1120" fill="none" stroke="#333" stroke-width="1.3" stroke-dasharray="2,2"/>
<path d="M1091,586Q1091,562 1111,561" fill="none" stroke="#7a9cc2" stroke-width="1.5"/>
<!-- break -->
<path d="M1090.5,612.5H1096" stroke="#333" stroke-width="1.8"/>
<path d="M1103.5,600L1096.5,624" stroke="#333" stroke-width="1.5"/>
<path d="M1103,612.5H1109.5M1114.5,612.5H1120" stroke="#8fb0d0" stroke-width="1.8"/>
<!-- extend -->
<path d="M1092.5,647.5H1104" stroke="#555" stroke-width="1.8"/><path d="M1107,647.5L1102,644V651Z" fill="#555"/>
<path d="M1090.5,655.5H1095M1097.5,655.5H1102.5M1105,655.5H1110" stroke="#999" stroke-width="1.8"/>
<path d="M1090.5,655.5H1095" stroke="#333" stroke-width="1.8"/>
<path d="M1119.5,639.5L1113.5,662.5" stroke="#333" stroke-width="1.5"/>
<!-- 3d box -->
<path d="M1090.5,683.5L1098,675.5H1120L1112.5,683.5Z" fill="#555"/>
<rect x="1090.5" y="686" width="17.5" height="17" fill="#666"/>
<path d="M1110,686L1120,676.5V695L1110,703Z" fill="#4f86c6"/>
<!-- join -->
<path d="M1095,718H1093Q1090.5,718 1090.5,720.5V735Q1090.5,737.5 1093,737.5H1117.5Q1120,737.5 1120,735V720.5Q1120,718 1117.5,718H1115M1103,718H1106.5" fill="none" stroke="#333" stroke-width="1.5"/>
<rect x="1095.5" y="715" width="6" height="5" fill="#4f86c0"/><rect x="1108.5" y="715" width="6" height="5" fill="#4f86c0"/>
</svg>

<!-- BOTTOM -->
<svg class="a" style="left:0;top:0" width="1126" height="857" viewBox="0 0 1126 857">
<!-- layout tabs -->
<rect x="84.5" y="759.5" width="30" height="17" fill="#f4f4f4" stroke="#a8a8a8" stroke-width="1"/>
<path d="M99.5,760V776" stroke="#c8c8c8" stroke-width="1"/>
<path d="M95,763.5V772.5L89.5,768Z" fill="#888"/><path d="M104,763.5V772.5L109.5,768Z" fill="#888"/>
<path d="M117,760L124.5,776.5H155.5L163.5,760Z" fill="#fbfbfb"/>
<path d="M163.5,760L155.5,776.5H202L208.5,776.5L201,760Z" fill="#f3f3f3"/>
<path d="M117,760L124.5,776.5M163.5,760L155.5,776.5M159.5,768.5L162.5,776.5M201,760L208.5,776.5M205,768.5L202,776.5M248.5,776.5L255.5,760" fill="none" stroke="#222" stroke-width="1.1"/>
<!-- command area -->
<path d="M4,816.5H1124" stroke="#777" stroke-width="1"/>
<path d="M4.5,785V837" stroke="#999" stroke-width="1"/>
<rect x="1108" y="785" width="17" height="31" fill="#f0f0f0"/>
<path d="M1112,795.5L1115.5,791.5L1119,795.5M1112,805.5L1115.5,809.5L1119,805.5" fill="none" stroke="#4a4a4a" stroke-width="2"/>
<rect x="1037" y="817" width="88" height="20" fill="#f0f0f0"/>
<rect x="1053" y="819" width="17" height="15" fill="#cdcdcd"/>
<path d="M1048,823L1044,827L1048,831M1097.5,823L1101.5,827L1097.5,831" fill="none" stroke="#4a4a4a" stroke-width="2"/>
<path d="M2,836.5H1126" stroke="#fbfbfb" stroke-width="1"/>
<!-- status buttons -->
<g fill="#ddebf7" stroke="#4a90c8" stroke-width="1">
<rect x="628.5" y="840.5" width="33" height="17"/>
<rect x="700.5" y="840.5" width="57" height="17"/>
<rect x="760.5" y="840.5" width="57" height="17"/>
<rect x="820.5" y="840.5" width="35" height="17"/>
<rect x="858.5" y="840.5" width="33" height="17"/>
</g>
<!-- mxcad logo -->
<rect x="1054" y="841" width="69" height="15" fill="#fdfdfd"/>
<path d="M1056.5,855.5L1060,842H1065.5L1066,846L1067,842H1070L1072.5,855.5H1067.5L1066.5,850L1064,855.5Z" fill="#14a58c"/>
<path d="M1057,854.5L1071,845" stroke="#e8fbf7" stroke-width="1.2"/>
</svg>
<div class="t" style="left:128px;top:762px;font-size:12px">模型</div>
<div class="t" style="left:166px;top:762px;font-size:12px">布局1</div>
<div class="t" style="left:212px;top:762px;font-size:12px">布局2</div>
<div class="t" style="left:6px;top:785px;font-size:12px;letter-spacing:1.5px">命令:</div>
<div class="t" style="left:6px;top:801px;font-size:12px;letter-spacing:1.5px">命令:</div>
<div class="t" style="left:6px;top:819px;font-size:12px;letter-spacing:1.5px">命令:</div>
<div class="t" style="left:5px;top:843px;font-size:13px;color:#222;letter-spacing:-0.15px">4511.735293,&nbsp; 94.087830,&nbsp; 0.000000</div>
<div class="t" style="left:594px;top:843px;font-size:12px;color:#222">栅格</div>
<div class="t" style="left:631px;top:843px;font-size:12px;color:#222">正交</div>
<div class="t" style="left:666px;top:843px;font-size:12px;color:#222">极轴</div>
<div class="t" style="left:702px;top:843px;font-size:12px;color:#222">对象捕捉</div>
<div class="t" style="left:762px;top:843px;font-size:12px;color:#222">对象追踪</div>
<div class="t" style="left:823px;top:843px;font-size:12px;color:#222">DYN</div>
<div class="t" style="left:861px;top:843px;font-size:12px;color:#222">线宽</div>
<div class="t" style="left:896px;top:843px;font-size:12px;color:#1a1adb">提交软件问题或增加新功能</div>
<div class="t" style="left:1076px;top:844px;font-size:12.5px;color:#1e2a44;letter-spacing:0.1px">MxCAD</div>
</body></html>
